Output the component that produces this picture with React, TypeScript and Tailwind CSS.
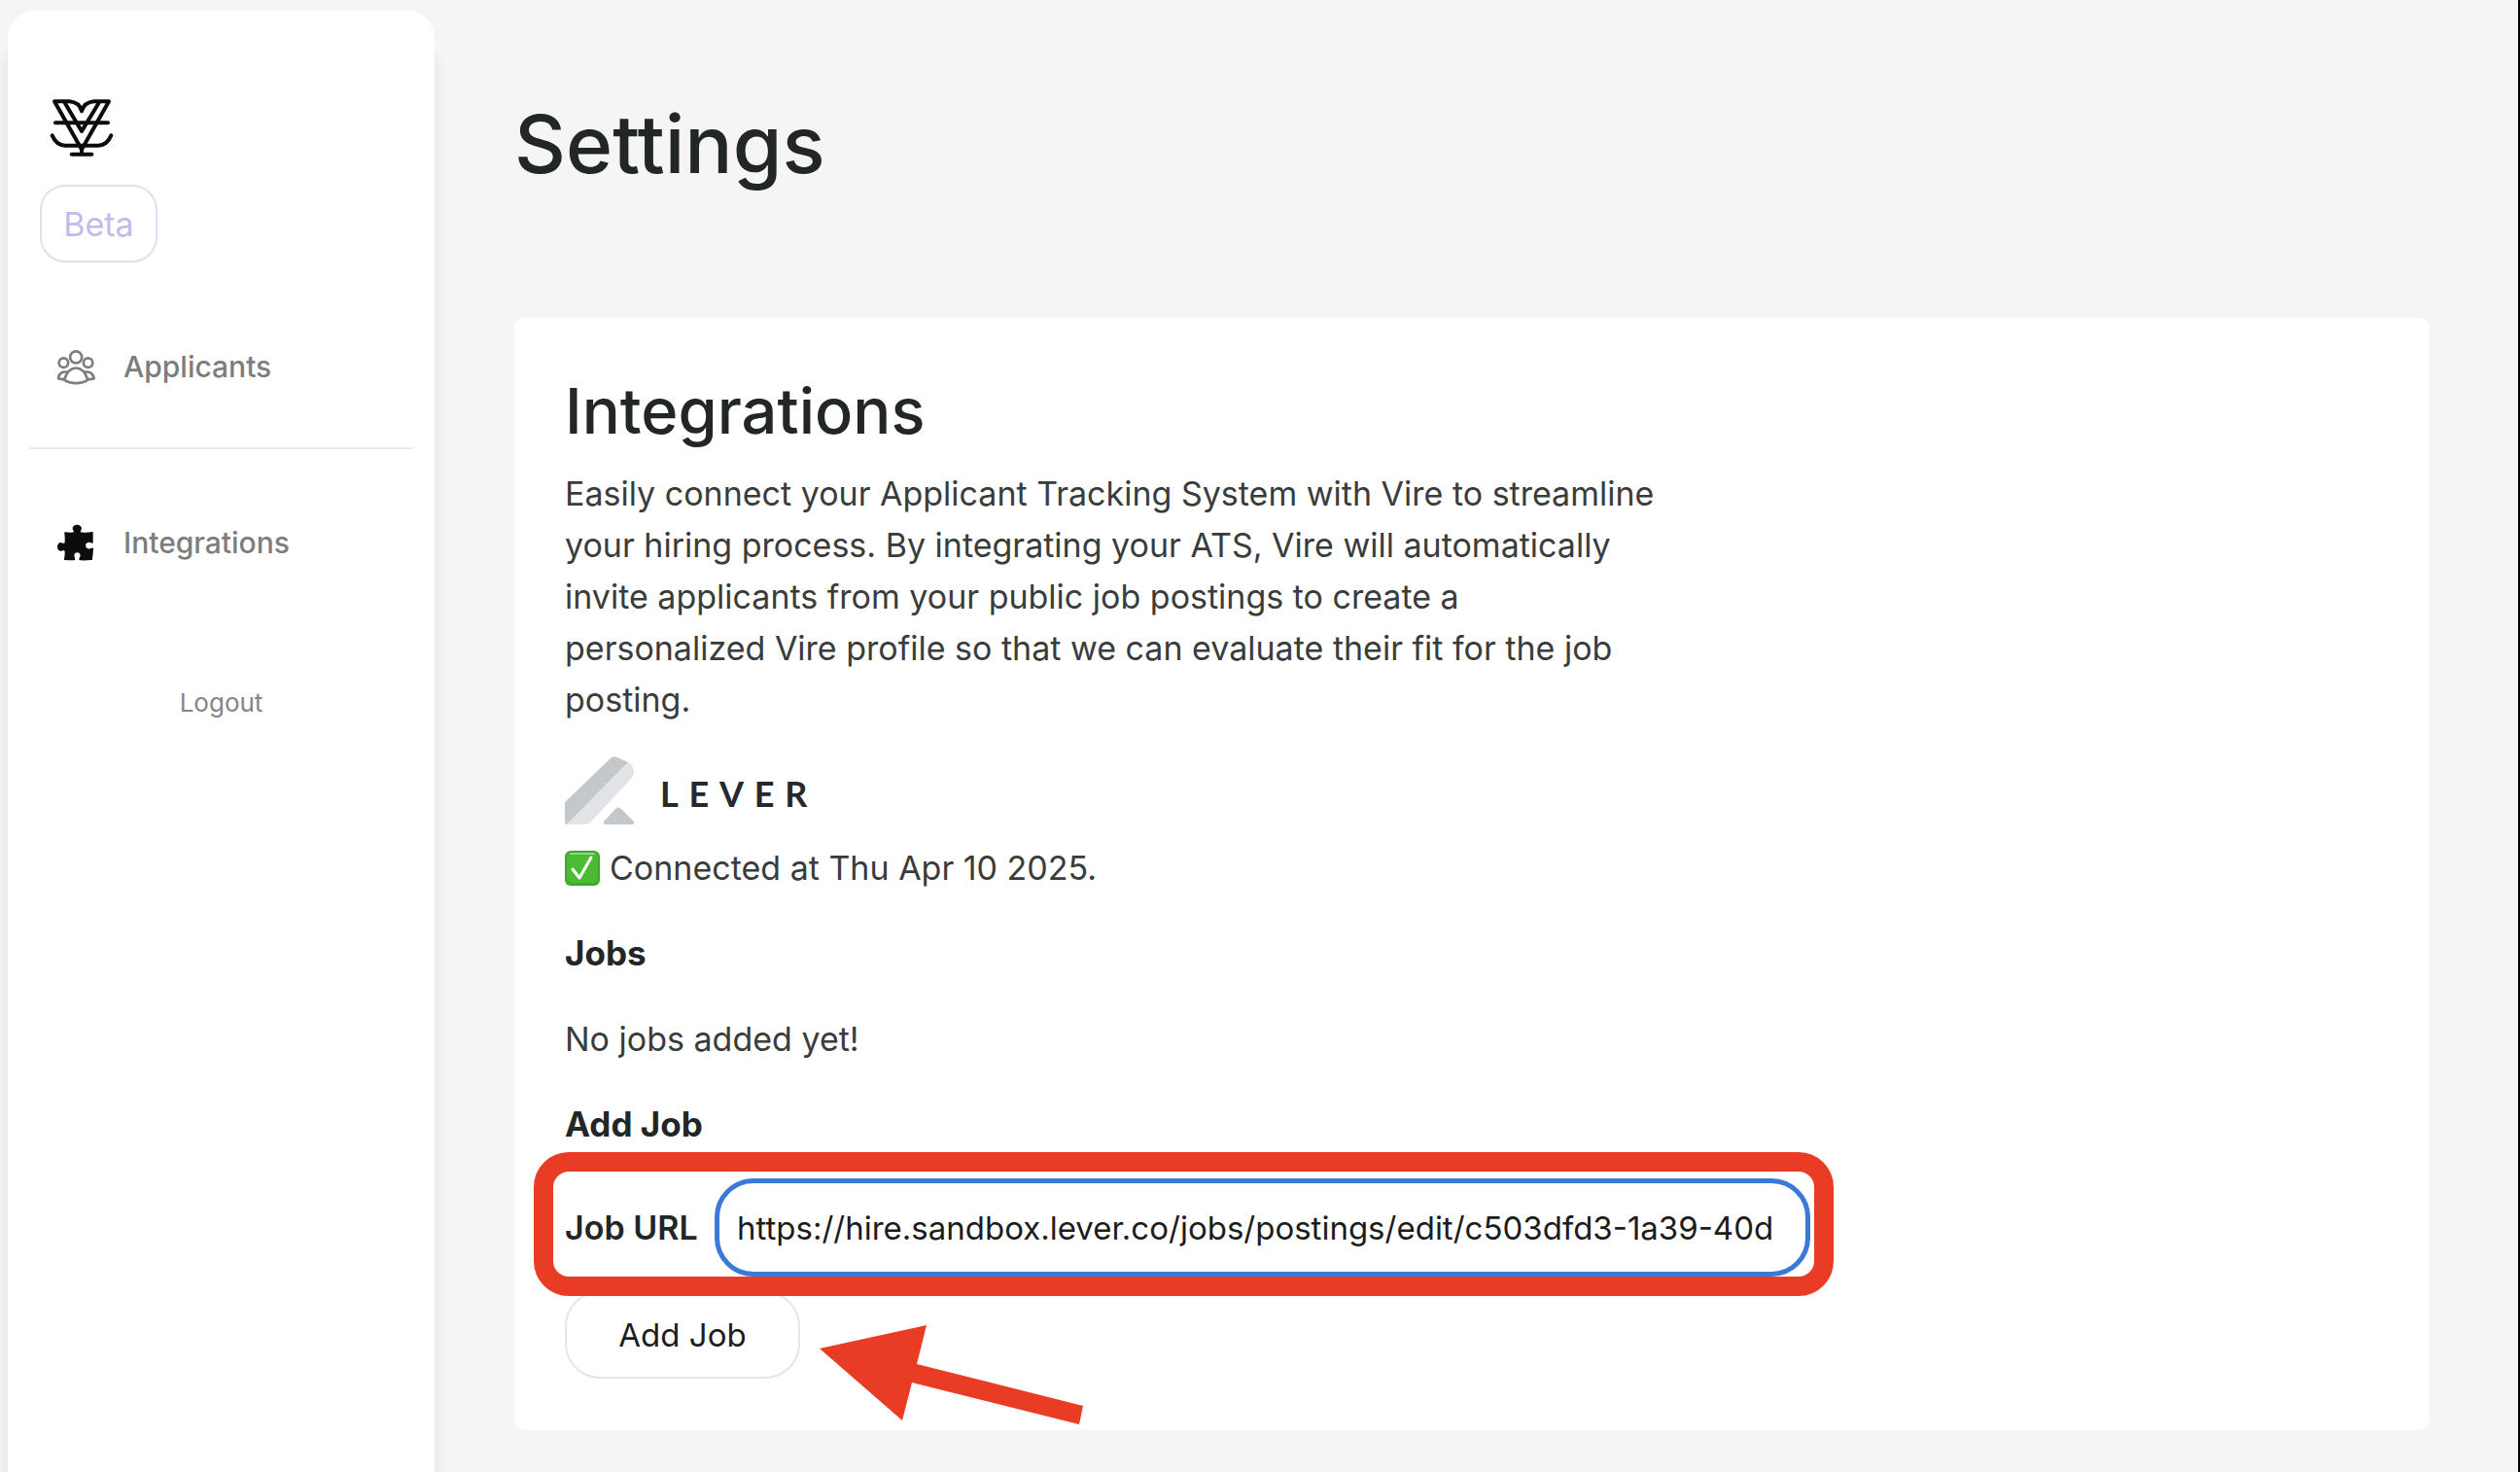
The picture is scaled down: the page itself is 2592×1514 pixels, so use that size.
const navLink =
  "flex h-12 items-center text-[30px] font-medium text-[#7d7d7d]";

function VireLogo() {
  return (
    <svg
      className="ml-[10px] h-[61px] w-[66px]"
      viewBox="154 302 198 183"
      fill="none"
      stroke="#0c0c0c"
      strokeWidth="12"
      strokeLinecap="round"
      strokeLinejoin="round"
      role="img"
      aria-label="Vire"
    >
      <path d="M169 312h46c22 2 34 12 38 30c5-18 17-28 38-30h46L253 460Z" />
      <path d="M201 316l52 88l53-88" />
      <path d="M172 378h162" />
      <path d="M162 417c9 22 22 31 40 31h102c18 0 31-9 40-31" />
      <path d="M253 458v16M222 475h62" />
    </svg>
  );
}

function PeopleIcon() {
  return (
    <svg
      className="h-[37px] w-[41px]"
      viewBox="174 115 122 110"
      fill="none"
      stroke="#7d7d7d"
      strokeWidth="8"
      strokeLinejoin="round"
      aria-hidden="true"
    >
      <circle cx="234" cy="140" r="18" />
      <circle cx="196" cy="157" r="14" />
      <circle cx="271" cy="157" r="14" />
      <path d="M198 209c8-24 19-36 36-36s28 12 36 36c-20 14-52 14-72 0Z" />
      <path d="M209 186c-16-4-28 3-29 19c6 2 11 3 18 2M259 186c16-4 28 3 30 19c-6 2-12 3-19 2" />
    </svg>
  );
}

function PuzzleIcon() {
  return (
    <svg
      className="h-[38px] w-[41px]"
      viewBox="174 651 122 115"
      fill="#0c0c0c"
      aria-hidden="true"
    >
      <path d="M199 676c9 1 18 2 26 1c4-1 2-4 0-7c-5-9 2-17 12-17s18 8 13 17c-2 3-4 6 1 7c12 1 24-1 34-2c2 0 2 1 2 3v30c0 3-2 4-5 2c-9-5-18 0-18 8s9 13 18 8c3-2 6-1 6 2c-1 12-2 22-3 31c0 3-2 4-4 4c-11 1-23 2-34 1c-4 0-4-3-3-6c3-5 4-9 3-12c-2-9-16-9-18 0c-1 3 0 7 2 12c1 3 1 6-3 6c-11 0-21 0-31-1c1-10 3-19 2-27c-1-4-4-4-7-2c-8 4-16-2-16-12s8-17 16-12c4 2 7 1 7-3c1-9 0-19-1-28c0-2 0-3 1-3Z" />
    </svg>
  );
}

function LeverLogo() {
  return (
    <div className="mt-8 mb-[18px] flex items-center gap-[26px]">
      <svg className="h-[70px] w-[72px]" viewBox="0 0 72 70" aria-hidden="true">
        <path fill="#c5c8cb" d="M0 47L47 2q3-3 7-1l11 5L2 70q-2 0-2-2Z" />
        <path fill="#e1e3e6" d="M65 6q4 2 5 6q3 6-2 11L28 66q-4 4-8 4H2Z" />
        <path fill="#c5c8cb" d="M52 54q3-3 6 0l13 13q1 3-2 3H42q-3 0-2-3Z" />
      </svg>
      <span className="pt-1.5 font-[Lato] text-4xl font-bold tracking-[0.3em] text-[#26282d]">
        LEVER
      </span>
    </div>
  );
}

function CheckMark() {
  return (
    <svg
      className="h-9 w-9"
      viewBox="0 0 36 36"
      fill="none"
      role="img"
      aria-label="Done"
    >
      <rect width="36" height="36" rx="6" fill="#3fa82f" />
      <rect x="2" y="2" width="32" height="31" rx="5" fill="#4bbb35" />
      <path d="M6 3h24" stroke="#8fd882" strokeWidth="2" strokeLinecap="round" />
      <path
        d="M8 19l7 9L27 7"
        stroke="#fff"
        strokeWidth="3"
        strokeLinecap="round"
        strokeLinejoin="round"
      />
    </svg>
  );
}

function Sidebar() {
  return (
    <aside className="mt-[11px] ml-2 flex w-[439px] shrink-0 flex-col rounded-t-[28px] bg-white px-[22px] pt-[90px] shadow-[0_36px_6px_8px_rgba(0,0,0,0.035)]">
      <div className="px-[11px]">
        <VireLogo />
        <span className="mt-7 flex h-20 w-[121px] items-center justify-center rounded-[26px] border-2 border-[#e3def2] text-[34px] text-[#c5bae9]">
          Beta
        </span>
      </div>
      <nav className="mt-[83px] flex flex-col">
        <a href="#applicants" className={`${navLink} gap-7 pl-7`}>
          <PeopleIcon />
          Applicants
        </a>
        <hr className="mt-[59px] mb-[72px] border-t-2 border-[#ededed]" />
        <a href="#integrations" className={`${navLink} gap-7 pl-7`}>
          <PuzzleIcon />
          Integrations
        </a>
      </nav>
      <button className="mt-[121px] self-center text-[26px] leading-10 text-[#858585]">
        Logout
      </button>
    </aside>
  );
}

function AddJobForm() {
  return (
    <form onSubmit={(e) => e.preventDefault()}>
      <div className="relative mt-[29px] flex w-[1281px] items-center justify-between">
        <label htmlFor="job-url" className="text-[34px] font-semibold">
          Job URL
        </label>
        <input
          id="job-url"
          type="text"
          defaultValue="https://hire.sandbox.lever.co/jobs/postings/edit/c503dfd3-1a39-40d"
          className="h-[101px] w-[1127px] rounded-[40px] border-5 border-[#3b78d8] bg-white px-[18px] text-[33px] text-[#1c1c1c] outline-none"
        />
        {/* highlight frame */}
        <div className="pointer-events-none absolute -top-[27px] -right-6 -bottom-5 -left-8 z-10 rounded-[36px] border-20 border-[#e83d24]" />
      </div>
      <div className="relative mt-[15px] w-fit">
        <button className="h-[90px] w-[242px] rounded-[36px] border-2 border-[#e6e6e6] text-[33px] text-[#1c1c1c]">
          Add Job
        </button>
        <svg
          className="absolute top-[35px] left-[262px] h-[103px] w-[272px]"
          viewBox="0 0 272 103"
          fill="#e83d24"
          aria-hidden="true"
        >
          <path d="M0 24L110 0L100 40L271 83L267 102L95 59L85 98Z" />
        </svg>
      </div>
    </form>
  );
}

export default function App() {
  return (
    <div className="flex min-h-screen border-r-2 border-black bg-[#f5f5f5] font-[Inter,sans-serif] text-[#232626]">
      <Sidebar />
      <main className="min-w-0 flex-1 pt-[97px] pr-[91px] pb-11 pl-[82px]">
        <h1 className="text-[82px] leading-[104px] font-medium">Settings</h1>
        <section className="mt-[126px] rounded-[10px] bg-white px-[52px] pt-[54px] pb-[53px] text-[35px] leading-[53px]">
          <h2 className="mb-4 text-[65px] leading-[84px] font-medium">
            Integrations
          </h2>
          <p className="max-w-[1130px] text-[34px] leading-[53px] text-[#3a3c3c]">
            Easily connect your Applicant Tracking System with Vire to
            streamline your hiring process. By integrating your ATS, Vire will
            automatically invite applicants from your public job postings to
            create a personalized Vire profile so that we can evaluate their fit
            for the job posting.
          </p>
          <LeverLogo />
          <p className="flex items-center gap-[10px] text-[34px] leading-[53px] text-[#3a3c3c]">
            <CheckMark />
            Connected at Thu Apr 10 2025.
          </p>
          <h3 className="mt-[35px] font-bold">Jobs</h3>
          <p className="my-[35px] text-[34px] leading-[53px] text-[#3a3c3c]">
            No jobs added yet!
          </p>
          <h3 className="font-bold">Add Job</h3>
          <AddJobForm />
        </section>
      </main>
    </div>
  );
}
